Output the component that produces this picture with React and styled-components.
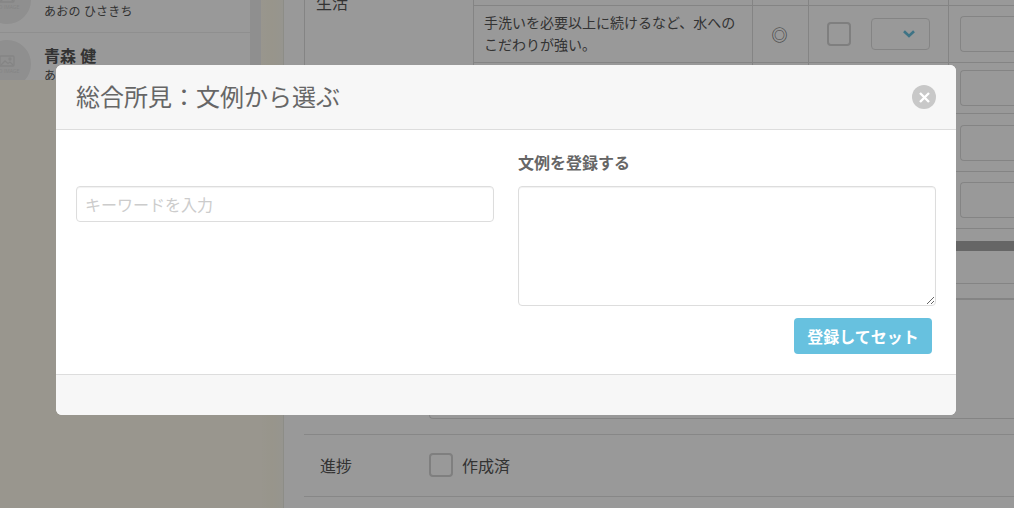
import React from "react";
import styled, { createGlobalStyle } from "styled-components";

const Global = createGlobalStyle`
  html, body { margin: 0; padding: 0; height: 100%; overflow: hidden; }
  body { font-family: "Open Sans", "Noto Sans CJK JP", sans-serif; color: #666; background: #fff; }
  * { box-sizing: border-box; }
`;
const Page = styled.div`
  width: 1014px; height: 508px; display: flex; overflow: hidden; position: relative; background: #fffaed;
`;
const Sidebar = styled.aside`
  width: 284px; flex: none; height: 508px; display: flex; align-items: flex-start;
  background: linear-gradient(90deg, #fffaed 0, #fffaed 261px, #fdf9e8 272px, #fbf8ef 284px);
  border-right: 1px solid #ecebe2;
`;
const PersonList = styled.ul`
  list-style: none; margin: 0; padding: 0; width: 250px; height: 80px; background: #fff; overflow: hidden; flex: none;
`;
const Person = styled.li`
  height: 64px; padding-top: 7px; display: flex; gap: 13px; border-bottom: 1px solid #eee;
  &:first-child { margin-top: -31px; }
`;
const Avatar = styled.div`
  width: 48px; height: 48px; margin-left: -17px; flex: none; border-radius: 50%; background: #eee;
  display: flex; flex-direction: column; align-items: center; justify-content: center; gap: 1px; color: #ddd;
`;
const NoImage = styled.span`
  font-size: 5px; line-height: 6px; color: #ddd; white-space: nowrap;
`;
const PersonText = styled.div`padding-top: 6px;`;
const PersonName = styled.div`
  font-size: 16px; line-height: 20px; font-weight: 700; color: #555;
`;
const PersonKana = styled.div`
  font-size: 12px; line-height: 20px; color: #555; letter-spacing: 0.2px;
`;
const ScrollTrack = styled.div`
  width: 11px; height: 80px; flex: none; background: #eee;
`;
const Main = styled.main`
  flex: 1; min-width: 0; background: #fff; padding-left: 20px; display: flex; flex-direction: column; height: 508px;
`;
const Table = styled.div`
  display: grid; flex: none; height: 229px; margin-bottom: 12px;
  grid-template-columns: 168px 279px 56px 140px 1fr;
  grid-template-rows: 6px 57px 51px 58px 57px;
  border-left: 1px solid #ddd;
`;
const CategoryCell = styled.div`
  grid-row: 1 / span 5; font-size: 16px; line-height: 20px; padding-left: 11px; margin-top: -7px; color: #555;
`;
const Cell = styled.div`
  border-left: 1px solid #ddd; border-bottom: 1px solid #ddd; display: flex; align-items: center; min-width: 0;
  justify-content: ${p => (p.$center ? "center" : "flex-start")};
  gap: 20px;
  padding: ${p => p.$pad || "0"};
`;
const CellText = styled.p`
  margin: 0; font-size: 14px; line-height: 22px; color: #555; white-space: pre-line;
`;
const Mark = styled.span`font-family: "Noto Sans CJK JP", sans-serif; font-size: 16px; color: #666; margin-left: -2px;`;
const CheckBox = styled.span`
  width: 24px; height: 24px; border: 2px solid #d4d4d4; border-radius: 4px; flex: none; background: #fff; display: inline-block;
`;
const SelectBox = styled.span`
  width: 59px; height: 32px; border: 1px solid #ddd; border-radius: 4px; display: flex; align-items: center; justify-content: flex-end; padding-right: 14px;
`;
const TextBox = styled.span`
  display: block; width: 100%; height: 36px; border: 1px solid #ddd; border-right: 0; border-radius: 4px 0 0 4px;
`;
const DarkBar = styled.div`height: 10px; background: #aaa; flex: none;`;
const RowLine = styled.div`
  border-bottom: ${p => p.$w || 1}px solid #ddd; height: ${p => p.$h}px; flex: none;
`;
const Row = styled.div`
  height: 62px; display: flex; align-items: center; border-bottom: 1px solid #e2e2e2; padding: 0 0 2px 16px; flex: none; gap: 8px;
`;
const RowLabel = styled.span`
  font-size: 16px; color: #555; width: 101px; flex: none;
`;
const RowValue = styled.span`font-size: 16px; color: #555; margin-left: 1px;`;
const FieldStub = styled.div`
  margin-left: 125px; height: 119px; border-left: 1px solid #ddd; border-bottom: 1px solid #ddd; border-radius: 0 0 0 4px;
`;
const StubWrap = styled.div`
  height: 135px; flex: none; border-bottom: 1px solid #e2e2e2;
`;
const Backdrop = styled.div`
  position: fixed; inset: 0; background: rgba(0,0,0,0.4); z-index: 10;
`;
const Modal = styled.div`
  position: fixed; left: 56px; top: 65px; width: 900px; height: 350px; background: #fff; border-radius: 6px; overflow: hidden; z-index: 11;
  display: flex; flex-direction: column;
`;
const ModalHeader = styled.header`
  height: 65px; flex: none; background: #f7f7f7; border-bottom: 1px solid #ddd; display: flex; align-items: center; justify-content: space-between; padding: 0 20px;
`;
const ModalTitle = styled.h2`
  margin: 0; font-size: 24px; font-weight: 400; line-height: 32px; color: #666;
`;
const CloseButton = styled.button`
  width: 24px; height: 24px; border: 0; padding: 0; border-radius: 50%; background: #c8c8c8; color: #fff; display: flex; align-items: center; justify-content: center;
`;
const ModalBody = styled.div`
  flex: 1; display: grid; grid-template-columns: 418px 418px; gap: 24px; padding: 20px 20px 0;
`;
const Column = styled.div`display: flex; flex-direction: column;`;
const FieldLabel = styled.label`
  font-size: 16px; font-weight: 700; color: #666; line-height: 26px; height: 36px; flex: none;
`;
const Spacer = styled.div`height: 36px; flex: none;`;
const KeywordInput = styled.input`
  width: 100%; height: 36px; border: 1px solid #ddd; border-radius: 4px; padding: 2px 8px 0; font: 16px "Open Sans", "Noto Sans CJK JP", sans-serif; color: #666; background: #fff; outline: 0;
  box-shadow: inset 0 1px 1px rgba(0,0,0,0.06);
  &::placeholder { color: #ccc; opacity: 1; }
`;
const Area = styled.textarea`
  width: 100%; height: 120px; display: block; border: 1px solid #ddd; border-radius: 4px; padding: 8px; background: #fff; outline: 0; resize: vertical; flex: none;
  box-shadow: inset 0 1px 1px rgba(0,0,0,0.06);
`;
const Actions = styled.div`
  display: flex; justify-content: flex-end; padding: 12px 4px 0 0;
`;
const SubmitButton = styled.button`
  width: 138px; height: 36px; border: 0; border-radius: 4px; background: #67c1df; color: #fff; font: 700 16px "Open Sans", "Noto Sans CJK JP", sans-serif; padding: 0;
`;
const ModalFooter = styled.footer`
  height: 41px; flex: none; background: #f7f7f7; border-top: 1px solid #ddd;
`;

const ImageIcon = () => (
  <svg width="16" height="12" viewBox="0 0 16 12" fill="none" stroke="currentColor" strokeWidth="1.3">
    <rect x="1" y="1" width="14" height="10" rx="1" />
    <path d="M2 10l4-4 3 2.5 2-1.5 3 3" />
    <circle cx="11" cy="4" r="1" />
  </svg>
);
const Chevron = () => (
  <svg width="12" height="8" viewBox="0 0 12 8" fill="none" stroke="#68c0de" strokeWidth="2.6">
    <path d="M1 1.2l5 4.8 5-4.8" />
  </svg>
);
const CloseIcon = () => (
  <svg width="11" height="11" viewBox="0 0 11 11" fill="none" stroke="#fff" strokeWidth="2.4">
    <path d="M1 1l9 9M10 1l-9 9" />
  </svg>
);

export default function App() {
  return (
    <>
      <Global />
      <Page>
        <Sidebar>
          <PersonList>
            <Person>
              <Avatar><ImageIcon /><NoImage>NO IMAGE</NoImage></Avatar>
              <PersonText><PersonName>青野 久吉</PersonName><PersonKana>あおの ひさきち</PersonKana></PersonText>
            </Person>
            <Person>
              <Avatar><ImageIcon /><NoImage>NO IMAGE</NoImage></Avatar>
              <PersonText><PersonName>青森 健</PersonName><PersonKana>あおもり けん</PersonKana></PersonText>
            </Person>
          </PersonList>
          <ScrollTrack />
        </Sidebar>
        <Main>
          <Table>
            <CategoryCell>生活</CategoryCell>
            <Cell /><Cell /><Cell /><Cell />
            <Cell $pad="0 0 0 10px"><CellText>{"手洗いを必要以上に続けるなど、水への\nこだわりが強い。"}</CellText></Cell>
            <Cell $center><Mark>◎</Mark></Cell>
            <Cell $pad="0 0 0 18px"><CheckBox /><SelectBox><Chevron /></SelectBox></Cell>
            <Cell $pad="0 0 0 11px"><TextBox /></Cell>
            <Cell /><Cell /><Cell /><Cell $pad="0 0 0 11px"><TextBox /></Cell>
            <Cell /><Cell /><Cell /><Cell $pad="0 0 0 11px"><TextBox /></Cell>
            <Cell /><Cell /><Cell /><Cell $pad="0 0 0 11px"><TextBox /></Cell>
          </Table>
          <DarkBar />
          <RowLine $h={33} />
          <RowLine $h={16} $w={2} />
          <StubWrap><FieldStub /></StubWrap>
          <Row><RowLabel>進捗</RowLabel><CheckBox /><RowValue>作成済</RowValue></Row>
        </Main>
        <Backdrop />
        <Modal>
          <ModalHeader>
            <ModalTitle>総合所見：文例から選ぶ</ModalTitle>
            <CloseButton aria-label="閉じる"><CloseIcon /></CloseButton>
          </ModalHeader>
          <ModalBody>
            <Column>
              <Spacer />
              <KeywordInput placeholder="キーワードを入力" />
            </Column>
            <Column>
              <FieldLabel>文例を登録する</FieldLabel>
              <Area />
              <Actions><SubmitButton>登録してセット</SubmitButton></Actions>
            </Column>
          </ModalBody>
          <ModalFooter />
        </Modal>
      </Page>
    </>
  );
}
